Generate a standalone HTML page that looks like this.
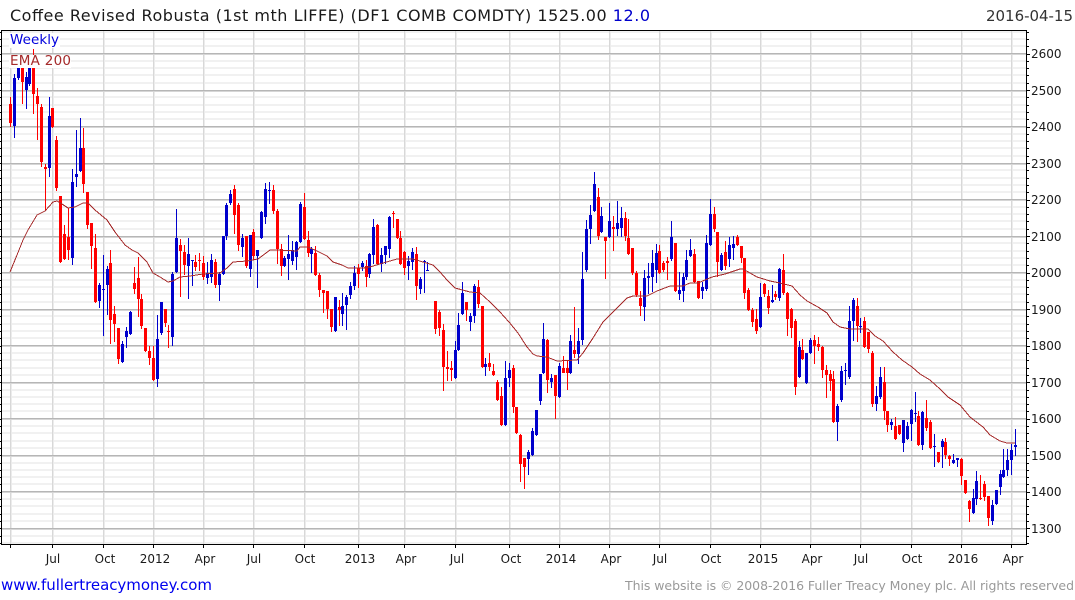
<!DOCTYPE html>
<html><head><meta charset="utf-8"><title>Coffee Revised Robusta</title>
<style>html,body{margin:0;padding:0;background:#fff;width:1075px;height:600px;overflow:hidden}svg{display:block}text{font-family:"DejaVu Sans",sans-serif}</style>
</head><body>
<svg width="1075" height="600" viewBox="0 0 1075 600" xmlns="http://www.w3.org/2000/svg">
<g shape-rendering="crispEdges" fill="none">
<path stroke="#f1f1f1" stroke-width="2" d="M2 32H1026M2 39H1026M2 46H1026M2 61H1026M2 68H1026M2 75H1026M2 83H1026M2 97H1026M2 105H1026M2 112H1026M2 119H1026M2 134H1026M2 141H1026M2 148H1026M2 156H1026M2 170H1026M2 178H1026M2 185H1026M2 192H1026M2 207H1026M2 214H1026M2 221H1026M2 229H1026M2 243H1026M2 251H1026M2 258H1026M2 265H1026M2 280H1026M2 287H1026M2 294H1026M2 302H1026M2 316H1026M2 324H1026M2 331H1026M2 338H1026M2 353H1026M2 360H1026M2 368H1026M2 375H1026M2 390H1026M2 397H1026M2 404H1026M2 411H1026M2 426H1026M2 433H1026M2 441H1026M2 448H1026M2 463H1026M2 470H1026M2 477H1026M2 484H1026M2 499H1026M2 506H1026M2 514H1026M2 521H1026M2 536H1026M2 543H1026"/>
<path stroke="#ececec" stroke-width="1" d="M11.500 31V544M53.500 31V544M104.500 31V544M154.500 31V544M204.500 31V544M254.500 31V544M305.500 31V544M359.500 31V544M405.500 31V544M456.500 31V544M510.500 31V544M560.500 31V544M610.500 31V544M660.500 31V544M711.500 31V544M761.500 31V544M811.500 31V544M861.500 31V544M912.500 31V544M962.500 31V544M1012.500 31V544"/>
<path stroke="#d8d8d8" stroke-width="1" d="M10.500 31V544M52.500 31V544M103.500 31V544M153.500 31V544M203.500 31V544M253.500 31V544M304.500 31V544M358.500 31V544M404.500 31V544M455.500 31V544M509.500 31V544M559.500 31V544M609.500 31V544M659.500 31V544M710.500 31V544M760.500 31V544M810.500 31V544M860.500 31V544M911.500 31V544M961.500 31V544M1011.500 31V544"/>
<path stroke="#d6d6d6" stroke-width="1" d="M2 54.500H1026M2 91.500H1026M2 127.500H1026M2 164.500H1026M2 200.500H1026M2 237.500H1026M2 273.500H1026M2 310.500H1026M2 346.500H1026M2 383.500H1026M2 419.500H1026M2 456.500H1026M2 492.500H1026M2 529.500H1026"/>
<path stroke="#b6b6b6" stroke-width="1" d="M2 53.500H1026M2 90.500H1026M2 126.500H1026M2 163.500H1026M2 199.500H1026M2 236.500H1026M2 272.500H1026M2 309.500H1026M2 345.500H1026M2 382.500H1026M2 418.500H1026M2 455.500H1026M2 491.500H1026M2 528.500H1026"/>

<path stroke="#f00" stroke-width="1" d="M10.5 97V127M22.5 60V104M33.5 49V114M37.5 88V140M41.5 104V167M45.5 164V210M52.5 108V128M56.5 136V191M60.5 196V263M64.5 225V260M68.5 208V260M83.5 128V193M87.5 192V229M91.5 223V269M95.5 234V303M110.5 250V344M114.5 306V342M118.5 328V364M134.5 267V294M138.5 257V317M141.5 294V329M145.5 328V352M149.5 346V365M153.5 346V381M165.5 309V327M168.5 325V348M180.5 239V297M184.5 245V275M195.5 255V271M199.5 253V271M203.5 256V280M215.5 259V288M234.5 185V234M238.5 203V251M246.5 236V268M253.5 229V260M273.5 185V214M277.5 209V264M281.5 244V276M304.5 193V240M308.5 231V257M315.5 246V276M319.5 273V297M323.5 290V313M327.5 291V319M331.5 309V332M339.5 300V326M358.5 264V288M366.5 260V287M377.5 224V265M393.5 211V228M397.5 219V239M400.5 231V265M404.5 251V275M416.5 247V300M435.5 301V334M439.5 310V336M443.5 324V391M447.5 351V381M451.5 361V381M466.5 302V321M478.5 280V308M482.5 306V368M489.5 353V371M493.5 364V376M497.5 380V401M501.5 387V426M513.5 365V413M516.5 407V434M520.5 434V482M524.5 458V489M547.5 339V393M555.5 375V419M563.5 356V373M567.5 360V390M574.5 307V358M598.5 188V240M605.5 237V279M613.5 216V251M625.5 212V241M628.5 219V255M632.5 248V275M636.5 271V297M640.5 291V316M659.5 245V274M663.5 261V272M667.5 257V280M675.5 243V292M694.5 249V283M698.5 281V299M714.5 207V232M717.5 232V277M725.5 241V270M737.5 235V246M741.5 246V263M744.5 258V299M748.5 288V311M752.5 308V327M756.5 309V334M764.5 283V297M768.5 290V314M775.5 291V300M783.5 254V295M787.5 292V336M791.5 308V338M795.5 319V395M802.5 339V360M814.5 335V364M818.5 337V351M822.5 346V378M826.5 365V398M830.5 370V391M833.5 371V423M857.5 298V342M864.5 317V348M868.5 332V353M872.5 351V407M884.5 367V420M887.5 411V432M895.5 417V440M899.5 425V435M918.5 411V446M926.5 400V431M930.5 420V449M938.5 452V463M945.5 438V459M949.5 455V466M961.5 458V485M965.5 480V494M969.5 500V522M980.5 475V500M984.5 481V501M988.5 496V526"/>
<path stroke="#f00" stroke-width="3" d="M10.5 104V123M22.5 60V82M33.5 60V94M37.5 96V104M41.5 107V162M45.5 167V169M52.5 108V127M56.5 140V188M60.5 196V262M64.5 234V259M68.5 237V250M83.5 148V184M87.5 192V225M91.5 223V246M95.5 248V302M110.5 263V320M114.5 314V324M118.5 328V359M134.5 283V289M138.5 278V299M141.5 299V326M145.5 328V351M149.5 351V358M153.5 358V380M165.5 309V323M168.5 331V332M180.5 245V251M184.5 252V265M195.5 262V267M199.5 260V261M203.5 263V277M215.5 262V285M234.5 189V215M238.5 205V245M246.5 236V266M253.5 232V256M273.5 190V211M277.5 211V249M281.5 249V266M304.5 207V239M308.5 240V253M315.5 253V275M319.5 275V290M323.5 290V293M327.5 291V309M331.5 309V327M339.5 307V310M358.5 268V274M366.5 266V277M377.5 225V264M393.5 213V214M397.5 219V238M400.5 238V264M404.5 252V268M416.5 254V286M435.5 301V329M439.5 312V328M443.5 330V367M447.5 367V369M451.5 368V370M466.5 302V310M478.5 287V304M482.5 306V367M489.5 363V367M493.5 371V375M497.5 382V400M501.5 396V425M513.5 368V407M516.5 407V433M520.5 435V464M524.5 458V467M547.5 340V380M555.5 375V396M563.5 368V373M567.5 368V373M574.5 350V354M598.5 197V236M605.5 237V241M613.5 227V229M625.5 218V236M628.5 238V254M632.5 248V273M636.5 273V295M640.5 298V306M659.5 251V273M663.5 263V270M667.5 261V263M675.5 243V291M694.5 254V282M698.5 281V298M714.5 214V229M717.5 232V262M725.5 252V266M737.5 237V245M741.5 246V258M744.5 258V293M748.5 290V310M752.5 310V322M756.5 319V331M764.5 284V294M768.5 296V308M775.5 294V297M783.5 270V293M787.5 293V319M791.5 309V328M795.5 321V387M802.5 350V359M814.5 340V346M818.5 344V347M822.5 347V370M826.5 370V375M830.5 374V381M833.5 379V422M857.5 306V326M864.5 321V347M868.5 332V349M872.5 353V404M884.5 382V411M887.5 411V425M895.5 426V439M899.5 425V434M918.5 416V445M926.5 418V428M930.5 422V448M938.5 452V462M945.5 442V455M949.5 456V459M961.5 459V476M965.5 480V493M969.5 501V509M980.5 498V499M984.5 484V497M988.5 496V518"/>
<path stroke="#0000cc" stroke-width="1" d="M14.5 74V138M18.5 60V80M26.5 72V109M29.5 60V86M49.5 97V177M72.5 169V265M76.5 130V187M80.5 118V172M99.5 283V308M103.5 255V336M107.5 266V315M122.5 341V363M126.5 327V348M130.5 311V335M157.5 315V387M161.5 302V335M172.5 272V346M176.5 209V273M188.5 238V299M192.5 260V286M207.5 262V284M211.5 254V283M219.5 272V301M223.5 236V275M226.5 203V240M230.5 190V205M242.5 234V257M250.5 235V277M257.5 250V288M261.5 211V239M265.5 183V224M269.5 182V204M284.5 256V267M288.5 235V280M292.5 241V265M296.5 241V270M300.5 202V243M311.5 247V273M335.5 297V332M342.5 293V326M346.5 295V330M350.5 282V299M354.5 266V290M362.5 261V271M369.5 253V278M373.5 219V264M381.5 248V272M385.5 246V264M389.5 216V258M408.5 256V280M412.5 248V270M420.5 277V294M424.5 260V293M427.5 262V271M455.5 341V379M458.5 313V351M462.5 282V315M470.5 313V331M474.5 284V323M485.5 358V376M505.5 361V426M509.5 363V387M528.5 450V475M532.5 428V456M536.5 410V436M540.5 374V405M543.5 323V374M551.5 374V388M559.5 363V398M570.5 335V374M578.5 328V364M582.5 252V345M586.5 220V272M590.5 205V244M594.5 172V212M601.5 207V233M609.5 203V238M617.5 201V236M621.5 207V237M644.5 270V321M648.5 263V294M652.5 250V292M656.5 244V283M671.5 221V261M679.5 272V300M683.5 273V302M686.5 250V280M690.5 239V257M702.5 282V299M706.5 235V291M710.5 199V246M721.5 253V271M729.5 237V267M733.5 236V260M760.5 283V328M772.5 285V303M779.5 268V301M799.5 341V378M806.5 353V384M810.5 338V354M837.5 404V441M841.5 366V402M845.5 363V385M849.5 306V379M853.5 298V341M860.5 318V333M876.5 386V411M880.5 367V399M891.5 419V430M903.5 420V452M907.5 422V440M911.5 409V441M915.5 392V422M922.5 411V450M934.5 434V467M942.5 439V468M953.5 454V464M957.5 458V467M973.5 489V514M976.5 471V505M992.5 500V525M996.5 490V505M1000.5 470V495M1003.5 449V478M1007.5 449V476M1011.5 444V475M1015.5 429V456"/>
<path stroke="#0000cc" stroke-width="3" d="M14.5 78V126M18.5 60V78M26.5 77V90M29.5 60V84M49.5 116V168M72.5 182V258M76.5 174V177M80.5 148V171M99.5 285V301M103.5 289V290M107.5 269V285M122.5 344V362M126.5 331V337M130.5 312V334M157.5 339V379M161.5 302V333M172.5 274V337M176.5 238V272M188.5 254V266M192.5 260V261M207.5 273V278M211.5 260V277M219.5 274V285M223.5 236V274M226.5 205V236M230.5 194V203M242.5 238V247M250.5 235V269M257.5 250V256M261.5 212V238M265.5 189V217M269.5 190V191M284.5 258V266M288.5 254V259M292.5 250V261M296.5 242V257M300.5 204V242M311.5 249V254M335.5 297V331M342.5 306V314M346.5 297V305M350.5 286V295M354.5 273V286M362.5 263V267M369.5 254V274M373.5 227V255M381.5 255V264M385.5 246V255M389.5 217V249M408.5 261V266M412.5 252V262M420.5 279V289M424.5 261V262M427.5 270V271M455.5 350V378M458.5 325V350M462.5 293V314M470.5 316V322M474.5 286V316M485.5 364V367M505.5 378V425M509.5 370V378M528.5 452V459M532.5 431V455M536.5 410V435M540.5 374V401M543.5 339V373M551.5 378V382M559.5 366V397M570.5 341V373M578.5 341V354M582.5 279V340M586.5 229V270M590.5 215V229M594.5 184V211M601.5 216V232M609.5 221V237M617.5 223V229M621.5 218V228M644.5 278V307M648.5 276V278M652.5 263V277M656.5 253V270M671.5 237V259M679.5 290V294M683.5 277V291M686.5 260V277M690.5 250V256M702.5 287V291M706.5 243V289M710.5 214V245M721.5 255V270M729.5 245V259M733.5 244V248M760.5 297V327M772.5 300V302M779.5 269V298M799.5 347V377M806.5 353V383M810.5 340V353M837.5 406V422M841.5 371V400M845.5 370V371M849.5 321V377M853.5 300V321M860.5 326V327M876.5 396V404M880.5 377V397M891.5 422V425M903.5 420V443M907.5 426V439M911.5 410V424M915.5 413V414M922.5 412V445M934.5 446V447M942.5 441V447M953.5 460V463M957.5 458V460M973.5 498V513M976.5 481V499M992.5 505V521M996.5 490V504M1000.5 474V487M1003.5 470V477M1007.5 460V470M1011.5 450V460M1015.5 445V447"/>

<path stroke="#a52a2a" stroke-width="1" d="M10 272L17 255L23 240L28 230L37 215L45 211L53 202L57 201L62 204L68 208L75 207L83 203L88 203L95 210L107 220L115 232L125 245L132 250L138 253L147 262L153 273L160 277L168 282L173 281L180 277L190 276L203 274L220 273L227 268L233 262L247 261L258 259L270 250L278 250L297 251L300 247L308 247L317 251L327 256L333 262L342 265L348 268L363 268L370 267L383 263L397 259L413 259L423 262L433 265L440 272L447 280L455 288L470 292L480 293L490 302L500 312L509 322L518 333L527 347L533 354L537 356L547 357L557 361L577 360L583 353L593 338L603 322L613 312L627 298L633 296L647 296L657 291L670 286L683 286L690 283L698 283L712 277L725 274L740 269L743 269L757 277L770 281L780 283L792 286L800 295L807 301L818 307L827 313L833 322L840 327L850 329L868 329L875 336L883 341L893 352L902 360L912 367L920 374L930 380L940 389L948 397L960 405L970 417L983 427L990 435L1000 441L1007 443L1015 443"/>

<rect x="9" y="33" width="51" height="15" fill="#fff" stroke="none"/>
<rect x="9" y="55" width="62" height="13" fill="#fff" stroke="none"/>

<path stroke="#000" stroke-width="1" d="M1.5 30.5H1026.5V544.5H1.5ZM10.5 545V548M52.5 545V548M103.5 545V548M153.5 545V548M203.5 545V548M253.5 545V548M304.5 545V548M358.5 545V548M404.5 545V548M455.5 545V548M509.5 545V548M559.5 545V548M609.5 545V548M659.5 545V548M710.5 545V548M760.5 545V548M810.5 545V548M860.5 545V548M911.5 545V548M961.5 545V548M1011.5 545V548"/>
<path stroke="#000" stroke-width="1" d="M1027 32.500H1029M1027 39.500H1029M1027 46.500H1029M1027 54.500H1030M1027 61.500H1029M1027 68.500H1029M1027 75.500H1029M1027 83.500H1029M1027 90.500H1030M1027 97.500H1029M1027 105.500H1029M1027 112.500H1029M1027 119.500H1029M1027 127.500H1030M1027 134.500H1029M1027 141.500H1029M1027 148.500H1029M1027 156.500H1029M1027 163.500H1030M1027 170.500H1029M1027 178.500H1029M1027 185.500H1029M1027 192.500H1029M1027 200.500H1030M1027 207.500H1029M1027 214.500H1029M1027 221.500H1029M1027 229.500H1029M1027 236.500H1030M1027 243.500H1029M1027 251.500H1029M1027 258.500H1029M1027 265.500H1029M1027 273.500H1030M1027 280.500H1029M1027 287.500H1029M1027 294.500H1029M1027 302.500H1029M1027 309.500H1030M1027 316.500H1029M1027 324.500H1029M1027 331.500H1029M1027 338.500H1029M1027 346.500H1030M1027 353.500H1029M1027 360.500H1029M1027 368.500H1029M1027 375.500H1029M1027 382.500H1030M1027 390.500H1029M1027 397.500H1029M1027 404.500H1029M1027 411.500H1029M1027 419.500H1030M1027 426.500H1029M1027 433.500H1029M1027 441.500H1029M1027 448.500H1029M1027 455.500H1030M1027 463.500H1029M1027 470.500H1029M1027 477.500H1029M1027 484.500H1029M1027 492.500H1030M1027 499.500H1029M1027 506.500H1029M1027 514.500H1029M1027 521.500H1029M1027 528.500H1030M1027 536.500H1029M1027 543.500H1029"/>
<path stroke="#000" stroke-width="1" d="M0 32.500H1M0 39.500H1M0 46.500H1M0 54.500H1M0 61.500H1M0 68.500H1M0 75.500H1M0 83.500H1M0 90.500H1M0 97.500H1M0 105.500H1M0 112.500H1M0 119.500H1M0 127.500H1M0 134.500H1M0 141.500H1M0 148.500H1M0 156.500H1M0 163.500H1M0 170.500H1M0 178.500H1M0 185.500H1M0 192.500H1M0 200.500H1M0 207.500H1M0 214.500H1M0 221.500H1M0 229.500H1M0 236.500H1M0 243.500H1M0 251.500H1M0 258.500H1M0 265.500H1M0 273.500H1M0 280.500H1M0 287.500H1M0 294.500H1M0 302.500H1M0 309.500H1M0 316.500H1M0 324.500H1M0 331.500H1M0 338.500H1M0 346.500H1M0 353.500H1M0 360.500H1M0 368.500H1M0 375.500H1M0 382.500H1M0 390.500H1M0 397.500H1M0 404.500H1M0 411.500H1M0 419.500H1M0 426.500H1M0 433.500H1M0 441.500H1M0 448.500H1M0 455.500H1M0 463.500H1M0 470.500H1M0 477.500H1M0 484.500H1M0 492.500H1M0 499.500H1M0 506.500H1M0 514.500H1M0 521.500H1M0 528.500H1M0 536.500H1M0 543.500H1"/>
</g>

<text x="10" y="21" font-size="16" fill="#1a1a1a" textLength="640">Coffee Revised Robusta (1st mth LIFFE) (DF1 COMB COMDTY) 1525.00 <tspan fill="#0000cc">12.0</tspan></text>
<text x="986" y="21" font-size="15" fill="#333" textLength="87">2016-04-15</text>
<text x="10" y="44" font-size="13.500" fill="#0000dd" textLength="49">Weekly</text>
<text x="10" y="65" font-size="13.500" fill="#a52a2a" textLength="61">EMA 200</text>

<g font-size="12" fill="#1a1a1a">
<text x="1031" y="58">2600</text><text x="1031" y="95">2500</text><text x="1031" y="131">2400</text><text x="1031" y="168">2300</text><text x="1031" y="204">2200</text><text x="1031" y="241">2100</text><text x="1031" y="277">2000</text><text x="1031" y="314">1900</text><text x="1031" y="350">1800</text><text x="1031" y="387">1700</text><text x="1031" y="423">1600</text><text x="1031" y="460">1500</text><text x="1031" y="496">1400</text><text x="1031" y="533">1300</text>
</g>
<g font-size="12" fill="#1a1a1a" text-anchor="middle">
<text x="53" y="563">Jul</text><text x="105" y="563">Oct</text><text x="155" y="563">2012</text><text x="205" y="563">Apr</text><text x="254" y="563">Jul</text><text x="305" y="563">Oct</text><text x="360" y="563">2013</text><text x="406" y="563">Apr</text><text x="457" y="563">Jul</text><text x="511" y="563">Oct</text><text x="561" y="563">2014</text><text x="611" y="563">Apr</text><text x="660" y="563">Jul</text><text x="711" y="563">Oct</text><text x="763" y="563">2015</text><text x="812" y="563">Apr</text><text x="861" y="563">Jul</text><text x="912" y="563">Oct</text><text x="963" y="563">2016</text><text x="1013" y="563">Apr</text>
</g>
<text x="1" y="590" font-size="15" fill="#0000ee" textLength="211">www.fullertreacymoney.com</text>
<text x="625" y="590" font-size="12.500" fill="#999" textLength="449">This website is © 2008-2016 Fuller Treacy Money plc. All rights reserved</text>
</svg>
</body></html>
